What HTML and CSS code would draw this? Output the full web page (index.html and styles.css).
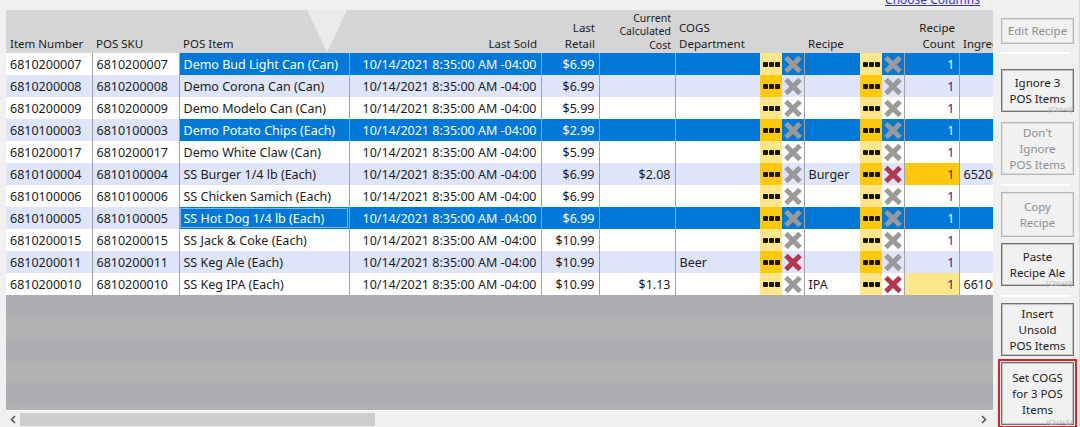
FILE: index.html
```
<!DOCTYPE html>
<html>
<head>
  <title>POS Items</title>
  <link rel="stylesheet" href="styles.css">
</head>
<body>
  <div class="window">
    <div class="main">
      <div class="topbar"><a class="choose" href="#">Choose Columns</a></div>

      <div class="grid">
        <div class="sort-arrow"></div>
        <table class="items">
          <colgroup>
            <col style="width:86px"><col style="width:87px"><col style="width:170px"><col style="width:192px">
            <col style="width:58px"><col style="width:76px"><col style="width:85px"><col style="width:22px">
            <col style="width:22px"><col style="width:56px"><col style="width:22px"><col style="width:22px">
            <col style="width:55px"><col style="width:34px">
          </colgroup>
          <thead>
            <tr>
              <th>Item Number</th>
              <th>POS SKU</th>
              <th>POS Item</th>
              <th class="num">Last Sold</th>
              <th class="num">Last<br>Retail</th>
              <th class="num small">Current<br>Calculated<br>Cost</th>
              <th>COGS<br>Department</th>
              <th></th><th></th>
              <th>Recipe</th>
              <th></th><th></th>
              <th class="num">Recipe<br>Count</th>
              <th>Ingredients</th>
            </tr>
          </thead>
          <tbody>
            <tr class="odd sel">
              <td class="key">6810200007</td><td class="key">6810200007</td>
              <td>Demo Bud Light Can (Can)</td><td class="num">10/14/2021 8:35:00 AM -04:00</td>
              <td class="num">$6.99</td><td class="num"></td><td class="flat"></td>
              <td class="dots"><span></span></td><td class="xcell"><span class="x"></span></td>
              <td class="flat"></td>
              <td class="dots"><span></span></td><td class="xcell"><span class="x"></span></td>
              <td class="num count">1</td><td></td>
            </tr>
            <tr class="even">
              <td class="key">6810200008</td><td class="key">6810200008</td>
              <td>Demo Corona Can (Can)</td><td class="num">10/14/2021 8:35:00 AM -04:00</td>
              <td class="num">$6.99</td><td class="num"></td><td class="flat"></td>
              <td class="dots"><span></span></td><td class="xcell"><span class="x"></span></td>
              <td class="flat"></td>
              <td class="dots"><span></span></td><td class="xcell"><span class="x"></span></td>
              <td class="num count">1</td><td></td>
            </tr>
            <tr class="odd">
              <td class="key">6810200009</td><td class="key">6810200009</td>
              <td>Demo Modelo Can (Can)</td><td class="num">10/14/2021 8:35:00 AM -04:00</td>
              <td class="num">$5.99</td><td class="num"></td><td class="flat"></td>
              <td class="dots"><span></span></td><td class="xcell"><span class="x"></span></td>
              <td class="flat"></td>
              <td class="dots"><span></span></td><td class="xcell"><span class="x"></span></td>
              <td class="num count">1</td><td></td>
            </tr>
            <tr class="even sel">
              <td class="key">6810100003</td><td class="key">6810100003</td>
              <td>Demo Potato Chips (Each)</td><td class="num">10/14/2021 8:35:00 AM -04:00</td>
              <td class="num">$2.99</td><td class="num"></td><td class="flat"></td>
              <td class="dots"><span></span></td><td class="xcell"><span class="x"></span></td>
              <td class="flat"></td>
              <td class="dots"><span></span></td><td class="xcell"><span class="x"></span></td>
              <td class="num count">1</td><td></td>
            </tr>
            <tr class="odd">
              <td class="key">6810200017</td><td class="key">6810200017</td>
              <td>Demo White Claw (Can)</td><td class="num">10/14/2021 8:35:00 AM -04:00</td>
              <td class="num">$5.99</td><td class="num"></td><td class="flat"></td>
              <td class="dots"><span></span></td><td class="xcell"><span class="x"></span></td>
              <td class="flat"></td>
              <td class="dots"><span></span></td><td class="xcell"><span class="x"></span></td>
              <td class="num count">1</td><td></td>
            </tr>
            <tr class="even">
              <td class="key">6810100004</td><td class="key">6810100004</td>
              <td>SS Burger 1/4 lb (Each)</td><td class="num">10/14/2021 8:35:00 AM -04:00</td>
              <td class="num">$6.99</td><td class="num">$2.08</td><td class="flat"></td>
              <td class="dots"><span></span></td><td class="xcell"><span class="x"></span></td>
              <td class="flat">Burger</td>
              <td class="dots"><span></span></td><td class="xcell"><span class="x red"></span></td>
              <td class="num count has-recipe">1</td><td>6520011</td>
            </tr>
            <tr class="odd">
              <td class="key">6810100006</td><td class="key">6810100006</td>
              <td>SS Chicken Samich (Each)</td><td class="num">10/14/2021 8:35:00 AM -04:00</td>
              <td class="num">$6.99</td><td class="num"></td><td class="flat"></td>
              <td class="dots"><span></span></td><td class="xcell"><span class="x"></span></td>
              <td class="flat"></td>
              <td class="dots"><span></span></td><td class="xcell"><span class="x"></span></td>
              <td class="num count">1</td><td></td>
            </tr>
            <tr class="even sel">
              <td class="key">6810100005</td><td class="key">6810100005</td>
              <td class="focus">SS Hot Dog 1/4 lb (Each)</td><td class="num">10/14/2021 8:35:00 AM -04:00</td>
              <td class="num">$6.99</td><td class="num"></td><td class="flat"></td>
              <td class="dots"><span></span></td><td class="xcell"><span class="x"></span></td>
              <td class="flat"></td>
              <td class="dots"><span></span></td><td class="xcell"><span class="x"></span></td>
              <td class="num count">1</td><td></td>
            </tr>
            <tr class="odd">
              <td class="key">6810200015</td><td class="key">6810200015</td>
              <td>SS Jack &amp; Coke (Each)</td><td class="num">10/14/2021 8:35:00 AM -04:00</td>
              <td class="num">$10.99</td><td class="num"></td><td class="flat"></td>
              <td class="dots"><span></span></td><td class="xcell"><span class="x"></span></td>
              <td class="flat"></td>
              <td class="dots"><span></span></td><td class="xcell"><span class="x"></span></td>
              <td class="num count">1</td><td></td>
            </tr>
            <tr class="even">
              <td class="key">6810200011</td><td class="key">6810200011</td>
              <td>SS Keg Ale (Each)</td><td class="num">10/14/2021 8:35:00 AM -04:00</td>
              <td class="num">$10.99</td><td class="num"></td><td class="flat">Beer</td>
              <td class="dots"><span></span></td><td class="xcell"><span class="x red"></span></td>
              <td class="flat"></td>
              <td class="dots"><span></span></td><td class="xcell"><span class="x"></span></td>
              <td class="num count">1</td><td></td>
            </tr>
            <tr class="odd">
              <td class="key">6810200010</td><td class="key">6810200010</td>
              <td>SS Keg IPA (Each)</td><td class="num">10/14/2021 8:35:00 AM -04:00</td>
              <td class="num">$10.99</td><td class="num">$1.13</td><td class="flat"></td>
              <td class="dots"><span></span></td><td class="xcell"><span class="x"></span></td>
              <td class="flat">IPA</td>
              <td class="dots"><span></span></td><td class="xcell"><span class="x red"></span></td>
              <td class="num count has-recipe">1</td><td>6610011</td>
            </tr>
          </tbody>
        </table>
        <div class="filler"></div>
      </div>

      <div class="hscroll">
        <svg class="arrow" width="6" height="9" viewBox="0 0 6 9"><polyline points="5,1 1.5,4.5 5,8" fill="none" stroke="#555" stroke-width="1.6"/></svg>
        <div class="thumb"></div>
        <svg class="arrow right" width="6" height="9" viewBox="0 0 6 9"><polyline points="1,1 4.5,4.5 1,8" fill="none" stroke="#555" stroke-width="1.6"/></svg>
      </div>
    </div>

    <div class="panel">
      <div class="btn disabled one">Edit Recipe</div>
      <div class="sep sep-first"></div>
      <div class="btn two gap-15">Ignore 3<br>POS Items<span class="hint">(Ctrl+I)</span></div>
      <div class="btn disabled three gap-10">Don't<br>Ignore<br>POS Items</div>
      <div class="sep"></div>
      <div class="btn disabled two tall gap-6">Copy<br>Recipe</div>
      <div class="btn two gap-6">Paste<br>Recipe Ale<span class="hint">(Ctrl+V)</span></div>
      <div class="sep"></div>
      <div class="btn three gap-6">Insert<br>Unsold<br>POS Items</div>
      <div class="btn primary gap-6">Set COGS<br>for 3 POS<br>Items<span class="hint">(Ctrl+S)</span></div>
    </div>
  </div>
</body>
</html>
```

FILE: styles.css
```
* {
  box-sizing: border-box;
}

body {
  margin: 0;
  width: 1080px;
  height: 427px;
  overflow: hidden;
  background: #f0f0f0;
  font-family: 'Noto Sans', 'Open Sans', sans-serif;
  font-size: 12.5px;
  color: #1b1b1b;
}

.window {
  display: flex;
  height: 427px;
}

/* Left side: grid */
.main {
  width: 987px;
  margin-left: 6px;
  display: flex;
  flex-direction: column;
}

.topbar {
  height: 10px;
  overflow: hidden;
  display: flex;
  justify-content: flex-end;
  align-items: flex-end;
}

.choose {
  color: #3434d4;
  font-size: 12px;
  line-height: 16px;
  margin: 0 13px 2px 0;
  text-decoration: underline;
}

.grid {
  position: relative;
  height: 400px;
  display: flex;
  flex-direction: column;
  overflow: hidden;
  background: #fff;
}

.sort-arrow {
  position: absolute;
  left: 301px;
  top: 0;
  width: 0;
  height: 0;
  border-left: 20px solid transparent;
  border-right: 20px solid transparent;
  border-top: 42px solid #ebebeb;
}

.items {
  table-layout: fixed;
  border-collapse: collapse;
  width: 987px;
}

.items th {
  height: 43px;
  background: #d5d5d5;
  font-size: 11.5px;
  font-weight: normal;
  text-align: left;
  vertical-align: bottom;
  line-height: 16px;
  padding: 0 4px 1px;
  white-space: nowrap;
  overflow: hidden;
}

.items th.small {
  font-size: 10.5px;
  line-height: 13.5px;
}

.items td {
  height: 22px;
  padding: 0 4px;
  line-height: 21px;
  white-space: nowrap;
  overflow: hidden;
  border-right: 1px solid #a3a3a3;
}

.items .num {
  text-align: right;
}

.items td.flat,
.items td.dots {
  border-right: none;
}

tr.odd td { background: #fff; }
tr.even td { background: #dee5fa; }

tr.sel td {
  background: #0078d7;
  color: #fff;
}

tr.sel td.key { color: #1b1b1b; }
tr.odd.sel td.key { background: #fff; }
tr.even.sel td.key { background: #dee5fa; }

td.focus {
  outline: 1px solid #7fb6ea;
  outline-offset: -2px;
}

.items td.count { color: #3a2070; }
tr.sel td.count { color: #fff; }

tr.odd td.dots,
tr.odd td.has-recipe { background: #ffe68a; }
tr.even td.dots,
tr.even td.has-recipe { background: #ffc90d; }

.items td.dots,
.items td.xcell {
  padding: 0;
  text-align: center;
  line-height: 0;
}

.dots span {
  display: inline-block;
  width: 5px;
  height: 5px;
  margin-right: 12px;
  border-radius: 1px;
  background: #141414;
  box-shadow: 6px 0 0 #141414, 12px 0 0 #141414;
}

.x {
  display: inline-block;
  position: relative;
  width: 18px;
  height: 18px;
}

.x::before,
.x::after {
  content: '';
  position: absolute;
  left: -1px;
  top: 6.5px;
  width: 20px;
  height: 5px;
  background: #9a9a9a;
  transform: rotate(45deg);
}

.x::after {
  transform: rotate(-45deg);
}

.x.red::before,
.x.red::after {
  background: #b3384f;
}

.filler {
  flex: 1;
  background: repeating-linear-gradient(to bottom, #adadb1 0, #adadb1 22px, #b2b2b2 22px, #b2b2b2 44px);
}

.hscroll {
  height: 17px;
  display: flex;
  align-items: center;
  border-top: 1px solid #fafafa;
}

.arrow {
  margin: 0 4px 0 4px;
}

.arrow.right {
  margin-left: auto;
  margin-right: 6px;
}

.thumb {
  width: 355px;
  height: 13px;
  background: #cdcdcd;
}

/* Right side: action buttons */
.panel {
  width: 87px;
  padding: 18px 0 0 8px;
  display: flex;
  flex-direction: column;
  border-right: 1px solid #dadada;
}

.btn {
  position: relative;
  width: 73px;
  display: flex;
  align-items: center;
  justify-content: center;
  text-align: center;
  font-size: 11.5px;
  line-height: 16px;
  padding: 0 2px;
  white-space: nowrap;
  background: #f1f1f1;
  border: 1px solid #707070;
  box-shadow: inset 0 0 0 1px #c2c2c2;
}

.btn.disabled {
  color: #8e8e8e;
  border-color: #b7b7b7;
  box-shadow: inset 0 0 0 1px #dcdcdc;
}

.btn.one { height: 26px; }
.btn.two { height: 43px; }
.btn.two.tall { height: 45px; }
.btn.three { height: 53px; }

.btn.primary {
  height: 63px;
  outline: 2px solid #e41c24;
  outline-offset: 1px;
}

.gap-6 { margin-top: 6px; }
.gap-10 { margin-top: 10px; }
.gap-15 { margin-top: 15px; }

.sep {
  width: 69px;
  height: 2px;
  background: #fff;
  margin-top: 9px;
}

.sep-first { margin-top: 8px; }

.hint {
  position: absolute;
  right: 1px;
  bottom: -3px;
  font-size: 7.5px;
  line-height: 10px;
  color: #b4b4b4;
}
```
